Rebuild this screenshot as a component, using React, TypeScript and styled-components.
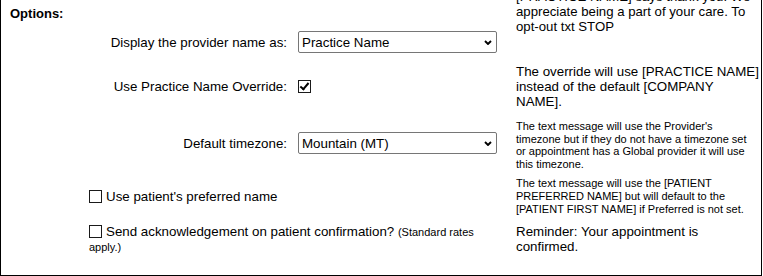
import React from 'react';
import styled, { createGlobalStyle } from 'styled-components';

const Global = createGlobalStyle`
  html, body { margin: 0; padding: 0; background: #fff; }
  body { font-family: "Liberation Sans", Arial, sans-serif; color: #000; }
`;

const Panel = styled.section`
  box-sizing: border-box;
  width: 762px;
  border: 1px solid #000;
  border-top: 0;
  padding: 0 0 21px 9px;
  background: #fff;
`;

const Row = styled.div<{ $top?: number; $height?: number; $align?: string }>`
  display: grid;
  grid-template-columns: 278px 208px 244px;
  column-gap: 10px;
  align-items: ${(p) => p.$align ?? 'center'};
  margin-top: ${(p) => p.$top ?? 0}px;
  ${(p) => (p.$height ? `height: ${p.$height}px;` : '')}
`;

const Heading = styled.div`
  grid-column: 1 / 3;
  padding-top: 6px;
  font-size: 13px;
  font-weight: bold;
  line-height: normal;
`;

const Preview = styled.div`
  grid-column: 3;
  height: 34px;
  overflow: hidden;
  display: flex;
  flex-direction: column;
  justify-content: flex-end;
  font-size: 13.2px;
  line-height: 15px;
`;

const Label = styled.label<{ $lift?: number }>`
  grid-column: 1;
  text-align: right;
  padding-right: 1px;
  font-size: 13.33px;
  line-height: normal;
  margin-bottom: ${(p) => p.$lift ?? 0}px;
`;

const Control = styled.div<{ $lift?: number }>`
  grid-column: 2;
  display: flex;
  align-items: center;
  margin-bottom: ${(p) => p.$lift ?? 0}px;
`;

const Desc = styled.div<{ $small?: boolean; $max?: number }>`
  grid-column: 3;
  font-size: ${(p) => (p.$small ? '11px' : '13.33px')};
  line-height: ${(p) => (p.$small ? '12.6px' : '15px')};
  ${(p) => (p.$max ? `max-width: ${p.$max}px;` : '')}
`;

const SelectWrap = styled.div`
  position: relative;
  width: 199px;
  height: 22px;
`;

const Select = styled.select`
  appearance: none;
  box-sizing: border-box;
  width: 100%;
  height: 100%;
  margin: 0;
  border: 1px solid #767676;
  border-radius: 2px;
  background: #fff;
  color: #000;
  font-family: "Liberation Sans", Arial, sans-serif;
  font-size: 13.33px;
  padding: 0 20px 0 3px;
`;

const Chevron = styled.svg`
  position: absolute;
  right: 5px;
  top: 9px;
  pointer-events: none;
`;

const Check = styled.input`
  appearance: none;
  position: relative;
  box-sizing: border-box;
  width: 13px;
  height: 13px;
  margin: 0 4px 0 0;
  border: 1px solid #1a1a1a;
  background: #fff;
  vertical-align: -2px;
  flex: none;

  &:checked::after {
    content: '';
    position: absolute;
    left: 3px;
    top: 0px;
    width: 3px;
    height: 7px;
    border-right: 2px solid #000;
    border-bottom: 2px solid #000;
    transform: rotate(40deg);
  }
`;

const CheckCell = styled.label`
  grid-column: 1 / 3;
  padding-left: 79px;
  font-size: 13.33px;
  line-height: normal;
`;

const Note = styled.span`
  font-size: 11px;
`;

function Dropdown({ value, options }: { value: string; options: string[] }) {
  return (
    <SelectWrap>
      <Select defaultValue={value}>
        {options.map((o) => (
          <option key={o}>{o}</option>
        ))}
      </Select>
      <Chevron width="8" height="5" viewBox="0 0 8 5">
        <path d="M1 1 L4 4 L7 1" fill="none" stroke="#000" strokeWidth="1.9" />
      </Chevron>
    </SelectWrap>
  );
}

export default function App() {
  return (
    <>
      <Global />
      <Panel>
        <Row $height={31} $align="start">
          <Heading>Options:</Heading>
          <Preview>
            <div>
              [PRACTICE NAME] says thank you! We appreciate being a part of your care. To
              opt-out txt STOP
            </div>
          </Preview>
        </Row>

        <Row $height={22}>
          <Label>Display the provider name as:</Label>
          <Control>
            <Dropdown value="Practice Name" options={['Practice Name', 'Provider Name']} />
          </Control>
        </Row>

        <Row $top={11}>
          <Label>Use Practice Name Override:</Label>
          <Control>
            <Check type="checkbox" defaultChecked />
          </Control>
          <Desc>The override will use [PRACTICE NAME] instead of the default [COMPANY NAME].</Desc>
        </Row>

        <Row $top={11}>
          <Label $lift={4}>Default timezone:</Label>
          <Control $lift={4}>
            <Dropdown
              value="Mountain (MT)"
              options={['Eastern (ET)', 'Central (CT)', 'Mountain (MT)', 'Pacific (PT)']}
            />
          </Control>
          <Desc $small $max={236}>
            The text message will use the Provider's timezone but if they do not have a timezone
            set or appointment has a Global provider it will use this timezone.
          </Desc>
        </Row>

        <Row $top={7}>
          <CheckCell>
            <Check type="checkbox" />
            Use patient's preferred name
          </CheckCell>
          <Desc $small $max={236}>
            The text message will use the [PATIENT PREFERRED NAME] but will default to the
            [PATIENT FIRST NAME] if Preferred is not set.
          </Desc>
        </Row>

        <Row $top={9}>
          <CheckCell>
            <Check type="checkbox" />
            Send acknowledgement on patient confirmation? <Note>(Standard rates apply.)</Note>
          </CheckCell>
          <Desc $max={238}>Reminder: Your appointment is confirmed.</Desc>
        </Row>
      </Panel>
    </>
  );
}
